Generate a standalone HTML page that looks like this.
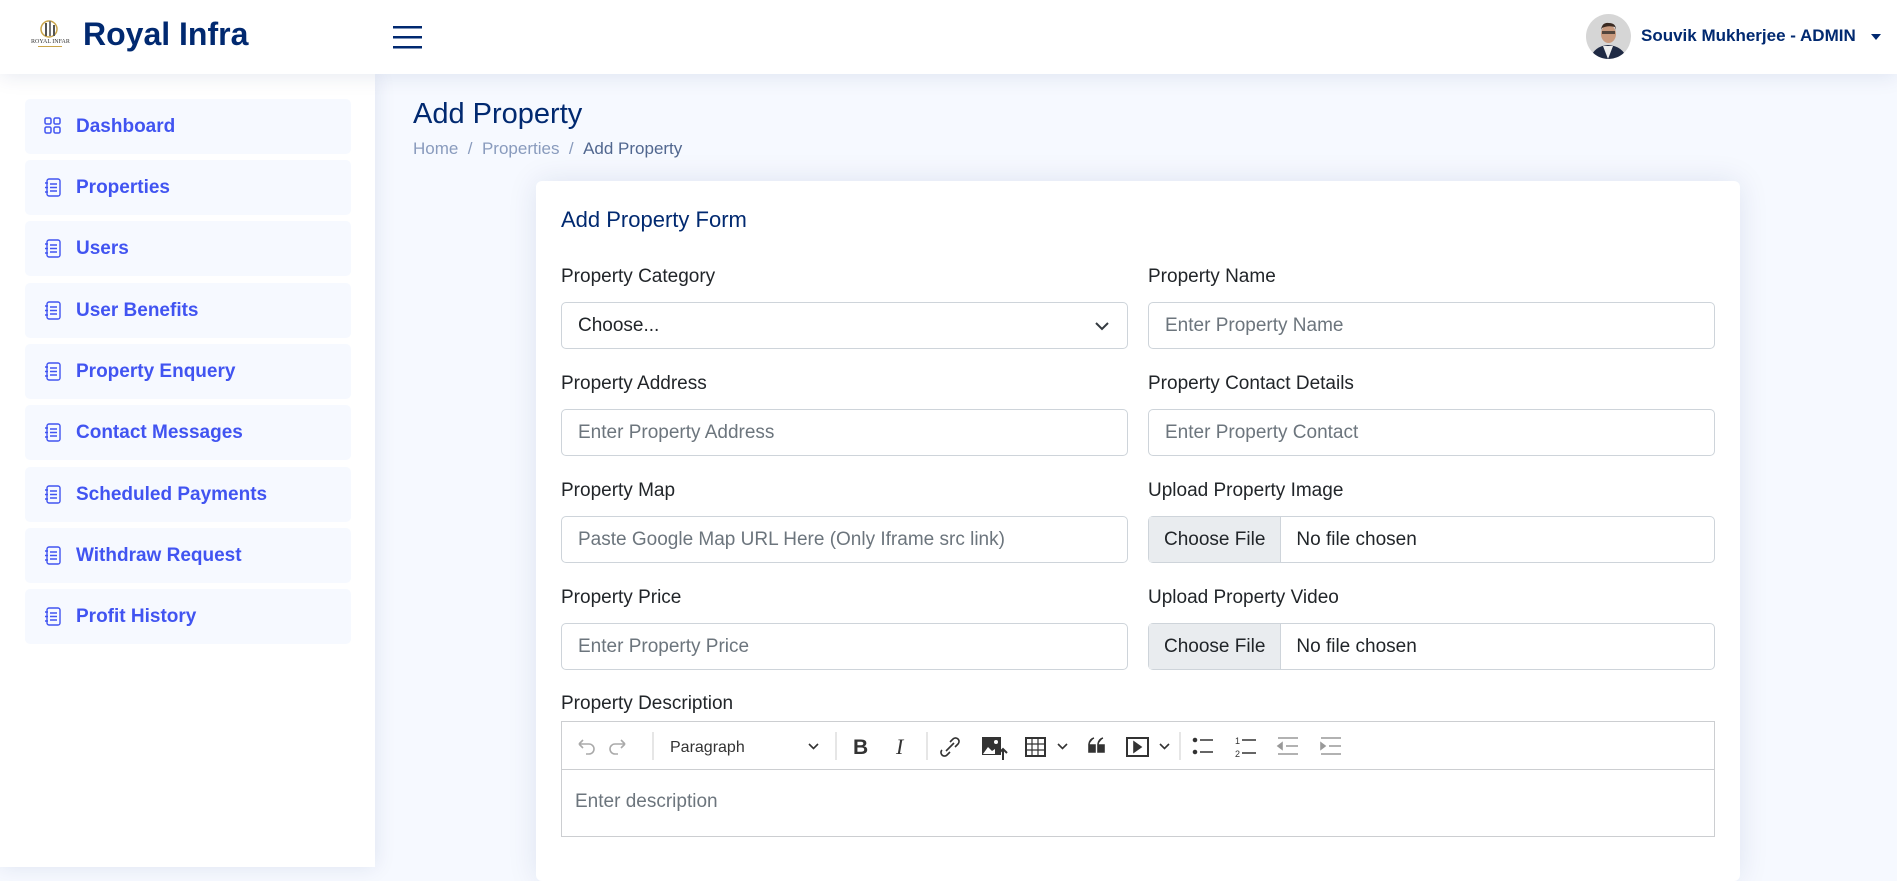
<!DOCTYPE html>
<html><head><meta charset="utf-8"><style>
*{box-sizing:border-box;margin:0;padding:0}
body{width:1897px;height:867px;overflow:hidden;background:#f6f9ff;font-family:"Liberation Sans",sans-serif;position:relative}
.hdr{position:absolute;left:0;top:0;width:1897px;height:74px;background:#fff;box-shadow:0 2px 20px rgba(1,41,112,.1);z-index:3}
.side{position:absolute;left:0;top:74px;width:375px;height:793px;background:#fff;box-shadow:0 0 20px rgba(1,41,112,.1);z-index:2}
.nav{position:absolute;left:25px;width:326px;height:55px;background:#f6f9ff;border-radius:5px;color:#4154f1;font-weight:bold;font-size:19px;line-height:55px;padding-left:51px}
.nav svg{position:absolute;left:19px;top:18px}
.abs{position:absolute}
.lbl{position:absolute;font-size:19px;color:#212529}
.inp{position:absolute;height:47px;width:567px;border:1px solid #ced4da;border-radius:5px;background:#fff;font-size:19px;color:#6c757d;line-height:45px;padding-left:16px}
.file{padding-left:0;color:#212529}
.file span{display:inline-block;background:#e9ecef;border-right:1px solid #ced4da;padding:0 15px;height:45px;margin-right:15px}
.tb{position:absolute;top:0;height:48px}
</style></head><body>
<div class="hdr">
 <svg class="abs" style="left:30px;top:18px" width="40" height="34" viewBox="0 0 40 34"><circle cx="19" cy="11" r="8" fill="none" stroke="#c9a44a" stroke-width="1.5"/><rect x="15" y="5" width="2" height="13" fill="#555"/><rect x="19" y="3" width="2" height="15" fill="#777"/><rect x="23" y="7" width="2" height="11" fill="#555"/><text x="1" y="25" font-size="6" font-family="Liberation Serif" fill="#333">ROYAL INFARA</text><rect x="8" y="28" width="24" height="1" fill="#c9a44a"/></svg>
 <div class="abs" style="left:83px;top:16px;font-size:32px;font-weight:bold;color:#012970">Royal Infra</div>
 <svg class="abs" style="left:393px;top:25px" width="29" height="24"><rect y="1" width="29" height="2.5" fill="#012970"/><rect y="11" width="29" height="2.5" fill="#012970"/><rect y="21" width="29" height="2.5" fill="#012970"/></svg>
 <svg class="abs" style="left:1586px;top:14px" width="45" height="45" viewBox="0 0 45 45"><defs><clipPath id="c"><circle cx="22.5" cy="22.5" r="22.5"/></clipPath></defs><g clip-path="url(#c)"><rect width="45" height="45" fill="#d6d6d6"/><path d="M4 45 Q8 32 22 31 Q37 32 41 45Z" fill="#1f2a44"/><path d="M17 32 L22 45 L27 32Z" fill="#eee"/><ellipse cx="22.5" cy="20" rx="7.5" ry="9" fill="#c99a7e"/><path d="M15 16 Q16 8 23 9 Q30 9 30 16 L29 13 Q22 11 16 14Z" fill="#3a2a22"/><rect x="16" y="17" width="13" height="3" fill="#222" opacity=".7"/></g></svg>
 <div class="abs" style="left:1641px;top:26px;font-size:17px;font-weight:bold;color:#012970">Souvik Mukherjee - ADMIN</div>
 <svg class="abs" style="left:1871px;top:34px" width="10" height="6"><path d="M0 0H10L5 6Z" fill="#012970"/></svg>
</div>
<div class="side">
 <div class="nav" style="top:25px"><svg width="17" height="17" viewBox="0 0 17 17" fill="none" stroke="#4154f1" stroke-width="1.5"><rect x="1" y="1" width="6" height="6" rx="1.5"/><rect x="10" y="1" width="6" height="6" rx="1.5"/><rect x="1" y="10" width="6" height="6" rx="1.5"/><rect x="10" y="10" width="6" height="6" rx="1.5"/></svg>Dashboard</div>
</div>
<div id="navs"></div>
<div class="abs" style="left:413px;top:98px;font-size:29px;color:#012970">Add Property</div>
<div class="abs" style="left:413px;top:139px;font-size:17px;color:#899bbd">Home&nbsp; / &nbsp;Properties&nbsp; / &nbsp;<span style="color:#51678f">Add Property</span></div>
<div class="abs" style="left:536px;top:181px;width:1204px;height:700px;background:#fff;border-radius:6px;box-shadow:0 0 30px rgba(1,41,112,.1)"></div>
<div class="abs" style="left:561px;top:207px;font-size:22px;color:#012970">Add Property Form</div>

<div class="lbl" style="left:561px;top:266px">Property Category</div>
<div class="lbl" style="left:1148px;top:266px">Property Name</div>
<div class="inp" style="left:561px;top:302px;color:#212529">Choose...<svg class="abs" style="right:18px;top:19px" width="14" height="9"><path d="M1 1L7 7L13 1" fill="none" stroke="#343a40" stroke-width="2"/></svg></div>
<div class="inp" style="left:1148px;top:302px">Enter Property Name</div>

<div class="lbl" style="left:561px;top:373px">Property Address</div>
<div class="lbl" style="left:1148px;top:373px">Property Contact Details</div>
<div class="inp" style="left:561px;top:409px">Enter Property Address</div>
<div class="inp" style="left:1148px;top:409px">Enter Property Contact</div>

<div class="lbl" style="left:561px;top:480px">Property Map</div>
<div class="lbl" style="left:1148px;top:480px">Upload Property Image</div>
<div class="inp" style="left:561px;top:516px">Paste Google Map URL Here (Only Iframe src link)</div>
<div class="inp file" style="left:1148px;top:516px"><span>Choose File</span>No file chosen</div>

<div class="lbl" style="left:561px;top:587px">Property Price</div>
<div class="lbl" style="left:1148px;top:587px">Upload Property Video</div>
<div class="inp" style="left:561px;top:623px">Enter Property Price</div>
<div class="inp file" style="left:1148px;top:623px"><span>Choose File</span>No file chosen</div>

<div class="lbl" style="left:561px;top:693px">Property Description</div>
<div class="abs" style="left:561px;top:721px;width:1154px;height:116px;border:1px solid #ccced1;background:#fff">
 <div class="abs" style="left:0;top:0;width:1152px;height:48px;border-bottom:1px solid #ccced1"></div>
 <svg class="tb" style="left:0" width="1152" height="48" fill="none" stroke="#333" stroke-width="1.6">
  <path d="M17 22 l4 -4 M17 22 l4 4 M17 22 h10 a5 5 0 0 1 0 10 h-3" stroke="#aaa"/>
  <path d="M63 22 l-4 -4 M63 22 l-4 4 M63 22 h-10 a5 5 0 0 0 0 10 h3" stroke="#aaa"/>
  <path d="M91 10v28M274 10v28M365 10v28M618 10v28" stroke="#ccc" stroke-width="1"/>
  <path d="M247 22l4.5 4.5 4.5-4.5"/>
  <text x="108" y="30" font-family="Liberation Sans" font-size="16" fill="#333" stroke="none">Paragraph</text>
  <text x="291" y="32" font-family="Liberation Sans" font-size="21" font-weight="bold" fill="#333" stroke="none">B</text>
  <text x="334" y="32" font-family="Liberation Serif" font-size="22" font-style="italic" fill="#333" stroke="none">I</text>
  <path d="M384 29 l8 -8 M380 28 a3 3 0 0 0 5 5 l3 -3 M388 20 l3 -3 a3 3 0 0 1 5 5 l-3 3"/>
  <rect x="420" y="15" width="19" height="18" fill="#333" stroke="none"/><path d="M421 32 l5 -7 4 4 3 -2 v5z" fill="#fff" stroke="none"/><circle cx="434" cy="20" r="2" fill="#fff" stroke="none"/><path d="M441 38v-11M437 31l4-4 4 4" stroke-width="2"/>
  <rect x="464" y="16" width="19" height="18" stroke-width="2"/><path d="M464 22h19M464 28h19M470 16v18M476 16v18" stroke-width="1.2"/><path d="M496 22l4.5 4.5 4.5-4.5"/>
  <path d="M527 22 q1 -5 5 -6 M527 22 v8 h6 v-7 h-6 M536 22 q1 -5 5 -6 M536 22 v8 h6 v-7 h-6" fill="#333"/>
  <rect x="565" y="16" width="21" height="18" stroke-width="2"/><path d="M572 20v10l7 -5z" fill="#333"/><path d="M598 22l4.5 4.5 4.5-4.5"/>
  <circle cx="633" cy="18" r="1.5" fill="#333"/><circle cx="633" cy="30" r="1.5" fill="#333"/><path d="M638 18h13M638 30h13"/>
  <text x="673" y="22" font-size="9" font-family="Liberation Sans" fill="#333" stroke="none">1</text><text x="673" y="35" font-size="9" font-family="Liberation Sans" fill="#333" stroke="none">2</text><path d="M680 18h14M680 31h14"/>
  <g stroke="#999"><path d="M716 16h20M724 24h12M716 32h20"/><path d="M720 21l-4 3 4 3z" fill="#999"/></g>
  <g stroke="#999"><path d="M759 16h20M767 24h12M759 32h20"/><path d="M759 21l4 3-4 3z" fill="#999"/></g>
 </svg>
 <div class="abs" style="left:13px;top:69px;font-size:19px;color:#6c757d">Enter description</div>
</div>
<script>
var n=["Properties","Users","User Benefits","Property Enquery","Contact Messages","Scheduled Payments","Withdraw Request","Profit History"],t=[160,221,283,344,405,467,528,589],h="";
var ic='<svg width="17" height="19" viewBox="0 0 17 19" fill="none" stroke="#4154f1" stroke-width="1.4"><rect x="3" y="1" width="13" height="17" rx="2"/><path d="M6 6h7M6 9.5h7M6 13h7M1 5h3M1 9.5h3M1 14h3"/></svg>';
for(var i=0;i<n.length;i++)h+='<div class="nav" style="top:'+t[i]+'px;z-index:4">'+ic+n[i]+'</div>';
document.getElementById("navs").innerHTML=h;
</script>
</body></html>
